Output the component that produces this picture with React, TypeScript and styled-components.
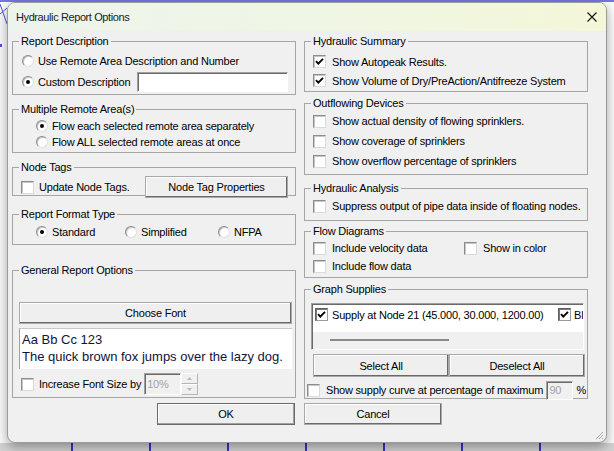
import React from "react";
import styled, { createGlobalStyle } from "styled-components";

const GlobalStyle = createGlobalStyle`
  html, body { margin: 0; padding: 0; }
  body { background: #fafafa; font-family: "Liberation Sans", Arial, sans-serif; }
  *, *::before, *::after { box-sizing: border-box; }
`;

const Desktop = styled.div`
  position: relative;
  width: 614px;
  height: 451px;
  overflow: hidden;
  background: #fbfbfb;
`;

const Backdrop = styled.svg`
  position: absolute;
  left: 0;
  top: 0;
`;

const Window = styled.div`
  position: absolute;
  left: 7px;
  top: 2px;
  width: 600px;
  height: 441px;
  border: 1px solid #9c9c9c;
  border-radius: 8px;
  background: #f0f0f0;
  box-shadow: 0 4px 12px rgba(0, 0, 0, 0.35);
  overflow: hidden;
  display: flex;
  flex-direction: column;
  color: #000;
`;

const TitleBar = styled.div`
  flex: none;
  height: 28px;
  display: flex;
  align-items: center;
  justify-content: space-between;
  padding: 0 9px 0 8px;
  background: linear-gradient(90deg, #edf4ec 0%, #f0f6e4 55%, #f4f7d8 100%);
  font-size: 11px;
  letter-spacing: -0.4px;
  color: #1b1b1b;
`;

const CloseGlyph = styled.svg`
  flex: none;
`;

const Columns = styled.div`
  display: flex;
  gap: 8px;
  padding-left: 4px;
`;

const Column = styled.div`
  width: 284px;
  display: flex;
  flex-direction: column;
  align-items: stretch;
`;

const Group = styled.fieldset<{ $mt: number; $h: number; $pt: number }>`
  margin: ${(p) => p.$mt}px 0 0 0;
  height: ${(p) => p.$h}px;
  padding: ${(p) => p.$pt}px 7px 0 8px;
  border: 1px solid #a5a5a5;
  min-width: 0;
  display: flex;
  flex-direction: column;
  align-items: stretch;
`;

const Legend = styled.legend`
  margin-left: -2px;
  padding: 0 2px;
  font-size: 11px;
  line-height: 12px;
  height: 12px;
  letter-spacing: -0.2px;
`;

const Row = styled.div<{ $h: number; $ml?: number; $mr?: number }>`
  flex: none;
  display: flex;
  align-items: center;
  height: ${(p) => p.$h}px;
  margin-left: ${(p) => p.$ml ?? 0}px;
  margin-right: ${(p) => p.$mr ?? 0}px;
  font-size: 11px;
  letter-spacing: -0.2px;
  white-space: nowrap;
`;

const Item = styled.label<{ $w?: number }>`
  display: flex;
  align-items: center;
  flex: none;
  width: ${(p) => (p.$w ? `${p.$w}px` : "auto")};
`;

const Text = styled.span<{ $gap?: number }>`
  margin-left: ${(p) => p.$gap ?? 4}px;
`;

const Box = styled.span<{ $strong?: boolean }>`
  flex: none;
  width: 13px;
  height: 13px;
  background: #fff;
  border: 1px solid;
  border-color: ${(p) =>
    p.$strong ? "#5f5f5f #9a9a9a #9a9a9a #5f5f5f" : "#8d8d8d #dadada #dadada #8d8d8d"};
  box-shadow: inset 1px 1px 0 ${(p) => (p.$strong ? "#7a7a7a" : "#c6c6c6")};
  display: inline-flex;
  align-items: center;
  justify-content: center;
`;

const RadioRing = styled.span`
  flex: none;
  width: 12px;
  height: 12px;
  border-radius: 50%;
  background: #fff;
  border: 1px solid;
  border-color: #8a8a8a #e0e0e0 #e0e0e0 #8a8a8a;
  box-shadow: inset 1px 1px 0 #c8c8c8;
  display: inline-flex;
  align-items: center;
  justify-content: center;
`;

const RadioDot = styled.span`
  width: 4px;
  height: 4px;
  border-radius: 50%;
  background: #000;
`;

const WinButton = styled.button<{ $w: number; $h?: number; $default?: boolean }>`
  flex: none;
  width: ${(p) => p.$w}px;
  height: ${(p) => p.$h ?? 22}px;
  padding: 0;
  margin: 0;
  background: #efefef;
  border: 1px solid ${(p) => (p.$default ? "#6a6a6a" : "#a9a9a9")};
  box-shadow: inset -1px -1px 0 ${(p) => (p.$default ? "#a0a0a0" : "#6a6a6a")},
    inset 1px 1px 0 #ffffff;
  font-family: "Liberation Sans", Arial, sans-serif;
  font-size: 11px;
  letter-spacing: -0.2px;
  color: #000;
`;

const TextField = styled.input<{ $w: number; $h: number }>`
  flex: none;
  width: ${(p) => p.$w}px;
  height: ${(p) => p.$h}px;
  margin: 0;
  padding: 0 0 0 2px;
  background: #fff;
  border: 1px solid;
  border-color: #a0a0a0 #ffffff #ffffff #a0a0a0;
  box-shadow: inset 1px 1px 0 #6a6a6a;
  font-family: "Liberation Sans", Arial, sans-serif;
  font-size: 11px;
  letter-spacing: -0.2px;
  color: #000;
  outline: none;
  &:disabled {
    background: #f0f0f0;
    color: #a3a3a3;
    -webkit-text-fill-color: #a3a3a3;
    opacity: 1;
  }
`;

const Spinner = styled.div`
  flex: none;
  width: 17px;
  height: 22px;
  display: flex;
  flex-direction: column;
`;

const SpinHalf = styled.div`
  flex: 1;
  background: #f0f0f0;
  border: 1px solid;
  border-color: #ffffff #b5b5b5 #b5b5b5 #ffffff;
  display: flex;
  align-items: center;
  justify-content: center;
`;

const Preview = styled.div`
  flex: none;
  margin: 4px 0 0 -2px;
  width: 273px;
  height: 41px;
  background: #fff;
  border-left: 1px solid #a0a0a0;
  border-top: 1px solid #c8c8c8;
  padding: 2px 0 0 2px;
  font-family: "Liberation Sans", Arial, sans-serif;
  font-size: 13px;
  line-height: 17px;
  color: #12123a;
  white-space: nowrap;
`;

const ListBox = styled.div`
  flex: none;
  margin: 4px 0 0 -2px;
  width: 273px;
  height: 47px;
  background: #fff;
  border: 1px solid;
  border-color: #a0a0a0 #ffffff #ffffff #a0a0a0;
  box-shadow: inset 1px 1px 0 #6a6a6a;
  padding: 1px 0 0 1px;
  display: flex;
  flex-direction: column;
  overflow: hidden;
`;

const ListItems = styled.div`
  flex: none;
  height: 27px;
  display: flex;
  align-items: flex-start;
  padding: 3px 0 0 2px;
  overflow: hidden;
  font-size: 11px;
  letter-spacing: -0.2px;
  white-space: nowrap;
`;

const ListItem = styled.div`
  flex: none;
  width: 243px;
  display: flex;
  align-items: center;
`;

const HScroll = styled.div`
  flex: 1;
  background: #f0f0f0;
  padding: 7px 0 0 17px;
`;

const Thumb = styled.div`
  width: 119px;
  height: 2px;
  background: #8a8a8a;
`;

const ButtonPair = styled.div`
  flex: none;
  display: flex;
  margin-top: 4px;
  width: 272px;
`;

const Percent = styled.span`
  margin-left: 3px;
`;

const FooterButton = styled.div<{ $mt: number; $align: "start" | "end" }>`
  display: flex;
  justify-content: ${(p) => (p.$align === "end" ? "flex-end" : "flex-start")};
  margin-top: ${(p) => p.$mt}px;
  padding-right: ${(p) => (p.$align === "end" ? 1 : 0)}px;
`;

const Grip = styled.svg`
  position: absolute;
  right: 2px;
  bottom: 2px;
`;

const Spacer = styled.span`
  margin-left: auto;
`;

function Check({ on, strong }: { on?: boolean; strong?: boolean }) {
  return (
    <Box $strong={strong}>
      {on && (
        <svg width="9" height="9" viewBox="0 0 9 9">
          <path d="M1 4.2 L3.3 6.6 L8 1.8" fill="none" stroke="#000" strokeWidth="1.9" />
        </svg>
      )}
    </Box>
  );
}

function Radio({ on }: { on?: boolean }) {
  return <RadioRing>{on && <RadioDot />}</RadioRing>;
}

function Arrow({ up }: { up?: boolean }) {
  return (
    <svg width="5" height="3" viewBox="0 0 5 3">
      <path d={up ? "M0 3 L2.5 0 L5 3 Z" : "M0 0 L2.5 3 L5 0 Z"} fill="#b8b8b8" />
    </svg>
  );
}

export default function App() {
  const bottomLines = [72, 150, 228, 306, 384, 462, 540];
  return (
    <>
      <GlobalStyle />
      <Desktop>
        <Backdrop width="614" height="451" viewBox="0 0 614 451">
          <line x1="0" y1="1" x2="614" y2="1" stroke="#4a4ad8" strokeWidth="1.5" />
          <line x1="0" y1="4" x2="7" y2="24" stroke="#5050e0" strokeWidth="1" />
          <line x1="0" y1="14" x2="7" y2="8" stroke="#5050e0" strokeWidth="1" />
          <line x1="1" y1="44" x2="1" y2="47" stroke="#5050e0" strokeWidth="2" />
          <rect x="0" y="443" width="614" height="8" fill="#d2d2d2" />
          {bottomLines.map((x) => (
            <line key={x} x1={x} y1="436" x2={x} y2="451" stroke="#3434c8" strokeWidth="2" />
          ))}
        </Backdrop>
        <Window>
          <TitleBar>
            <span>Hydraulic Report Options</span>
            <CloseGlyph width="10" height="10" viewBox="0 0 10 10">
              <path d="M0.5 0.5 L9.5 9.5 M9.5 0.5 L0.5 9.5" stroke="#111" strokeWidth="1.1" />
            </CloseGlyph>
          </TitleBar>
          <Columns>
            <Column>
              <Group $mt={4} $h={60} $pt={3}>
                <Legend>Report Description</Legend>
                <Row $h={21} $ml={1}>
                  <Item>
                    <Radio />
                    <Text>Use Remote Area Description and Number</Text>
                  </Item>
                </Row>
                <Row $h={21} $ml={1}>
                  <Item>
                    <Radio on />
                    <Text>Custom Description</Text>
                  </Item>
                  <Spacer />
                  <TextField $w={151} $h={20} defaultValue="" />
                </Row>
              </Group>

              <Group $mt={8} $h={50} $pt={3}>
                <Legend>Multiple Remote Area(s)</Legend>
                <Row $h={16} $ml={15}>
                  <Item>
                    <Radio on />
                    <Text>Flow each selected remote area separately</Text>
                  </Item>
                </Row>
                <Row $h={16} $ml={15}>
                  <Item>
                    <Radio />
                    <Text>Flow ALL selected remote areas at once</Text>
                  </Item>
                </Row>
              </Group>

              <Group $mt={8} $h={35} $pt={3}>
                <Legend>Node Tags</Legend>
                <Row $h={22}>
                  <Item>
                    <Check />
                    <Text $gap={5}>Update Node Tags.</Text>
                  </Item>
                  <Spacer />
                  <WinButton $w={143}>Node Tag Properties</WinButton>
                </Row>
              </Group>

              <Group $mt={12} $h={37} $pt={4}>
                <Legend>Report Format Type</Legend>
                <Row $h={16} $ml={15}>
                  <Item $w={89}>
                    <Radio on />
                    <Text>Standard</Text>
                  </Item>
                  <Item $w={93}>
                    <Radio />
                    <Text>Simplified</Text>
                  </Item>
                  <Item>
                    <Radio />
                    <Text>NFPA</Text>
                  </Item>
                </Row>
              </Group>

              <Group $mt={19} $h={134} $pt={26}>
                <Legend>General Report Options</Legend>
                <Row $h={22} $ml={-2}>
                  <WinButton $w={273}>Choose Font</WinButton>
                </Row>
                <Preview>
                  Aa Bb Cc 123
                  <br />
                  The quick brown fox jumps over the lazy dog.
                </Preview>
                <Row $h={22} style={{ marginTop: 4 }}>
                  <Item>
                    <Check />
                    <Text $gap={5}>Increase Font Size by</Text>
                  </Item>
                  <TextField $w={37} $h={22} defaultValue="10%" disabled style={{ marginLeft: 3 }} />
                  <Spinner>
                    <SpinHalf>
                      <Arrow up />
                    </SpinHalf>
                    <SpinHalf>
                      <Arrow />
                    </SpinHalf>
                  </Spinner>
                </Row>
              </Group>

              <FooterButton $mt={5} $align="end">
                <WinButton $w={138} $default>
                  OK
                </WinButton>
              </FooterButton>
            </Column>

            <Column>
              <Group $mt={4} $h={57} $pt={5}>
                <Legend>Hydraulic Summary</Legend>
                <Row $h={19}>
                  <Item>
                    <Check on />
                    <Text $gap={6}>Show Autopeak Results.</Text>
                  </Item>
                </Row>
                <Row $h={19}>
                  <Item>
                    <Check on />
                    <Text $gap={6}>Show Volume of Dry/PreAction/Antifreeze System</Text>
                  </Item>
                </Row>
              </Group>

              <Group $mt={5} $h={78} $pt={2}>
                <Legend>Outflowing Devices</Legend>
                <Row $h={20}>
                  <Item>
                    <Check />
                    <Text $gap={6}>Show actual density of flowing sprinklers.</Text>
                  </Item>
                </Row>
                <Row $h={20}>
                  <Item>
                    <Check />
                    <Text $gap={6}>Show coverage of sprinklers</Text>
                  </Item>
                </Row>
                <Row $h={20}>
                  <Item>
                    <Check />
                    <Text $gap={6}>Show overflow percentage of sprinklers</Text>
                  </Item>
                </Row>
              </Group>

              <Group $mt={7} $h={39} $pt={2}>
                <Legend>Hydraulic Analysis</Legend>
                <Row $h={20}>
                  <Item>
                    <Check />
                    <Text $gap={6}>Suppress output of pipe data inside of floating nodes.</Text>
                  </Item>
                </Row>
              </Group>

              <Group $mt={4} $h={53} $pt={2}>
                <Legend>Flow Diagrams</Legend>
                <Row $h={18}>
                  <Item $w={151}>
                    <Check />
                    <Text $gap={6}>Include velocity data</Text>
                  </Item>
                  <Item>
                    <Check />
                    <Text $gap={6}>Show in color</Text>
                  </Item>
                </Row>
                <Row $h={18}>
                  <Item>
                    <Check />
                    <Text $gap={6}>Include flow data</Text>
                  </Item>
                </Row>
              </Group>

              <Group $mt={5} $h={116} $pt={4}>
                <Legend>Graph Supplies</Legend>
                <ListBox>
                  <ListItems>
                    <ListItem>
                      <Check on strong />
                      <Text>Supply at Node 21 (45.000, 30.000, 1200.00)</Text>
                    </ListItem>
                    <ListItem>
                      <Check on strong />
                      <Text $gap={3}>Bl</Text>
                    </ListItem>
                  </ListItems>
                  <HScroll>
                    <Thumb />
                  </HScroll>
                </ListBox>
                <ButtonPair>
                  <WinButton $w={136} $h={23}>
                    Select All
                  </WinButton>
                  <WinButton $w={136} $h={23}>
                    Deselect All
                  </WinButton>
                </ButtonPair>
                <Row $h={20} $ml={-6} $mr={-6} style={{ marginTop: 3 }}>
                  <Item>
                    <Check />
                    <Text $gap={6}>Show supply curve at percentage of maximum</Text>
                  </Item>
                  <Spacer />
                  <TextField $w={27} $h={19} defaultValue="90" disabled />
                  <Percent>%</Percent>
                </Row>
              </Group>

              <FooterButton $mt={4} $align="start">
                <WinButton $w={138}>Cancel</WinButton>
              </FooterButton>
            </Column>
          </Columns>
          <Grip width="10" height="10" viewBox="0 0 10 10">
            <path d="M9 2 L2 9 M9 5 L5 9 M9 8 L8 9" stroke="#a8a8a8" strokeWidth="1" />
          </Grip>
        </Window>
      </Desktop>
    </>
  );
}
